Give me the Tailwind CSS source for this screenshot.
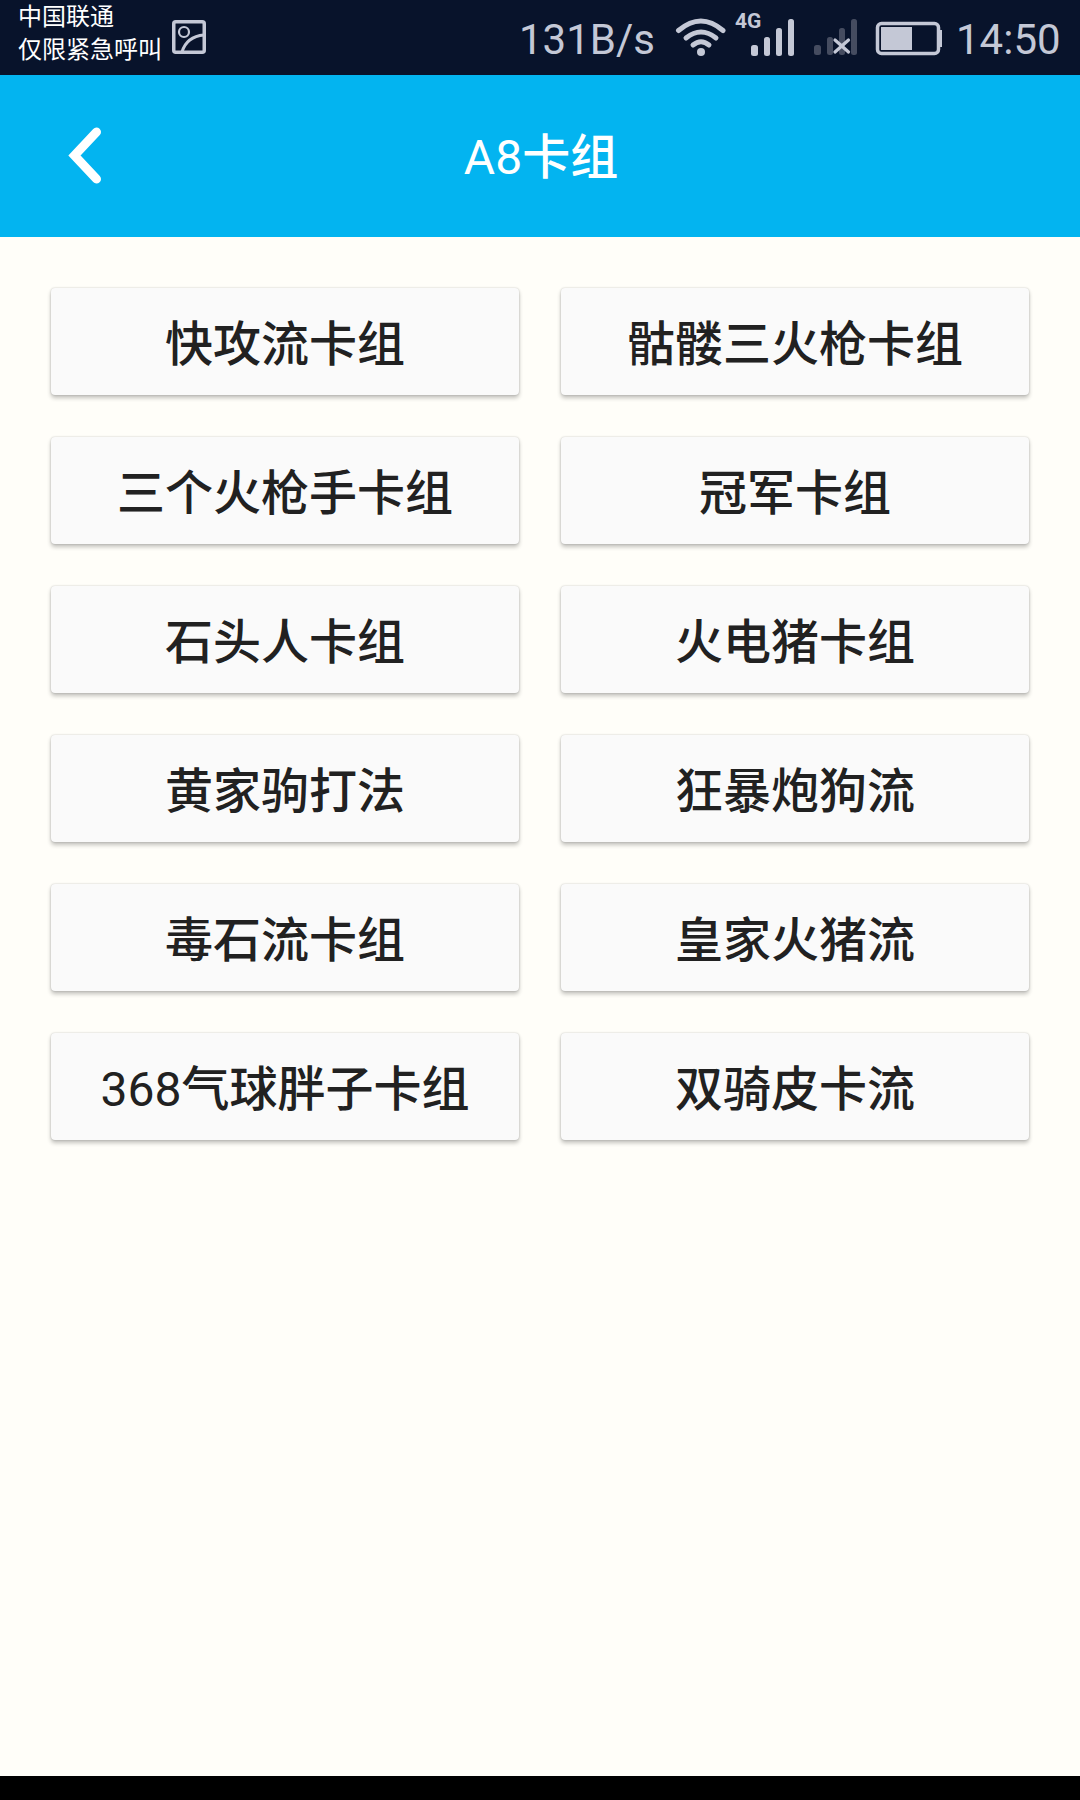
<!DOCTYPE html>
<html lang="zh-CN">
<head>
  <meta charset="UTF-8">
  <title>A8卡组</title>
  <script src="https://cdn.jsdelivr.net/npm/@tailwindcss/browser@4"></script>
</head>
<body class="w-[1080px] h-[1800px] flex flex-col overflow-hidden bg-[#fffef9] font-[Roboto,'Noto_Sans_CJK_SC',sans-serif]">

  <!-- Status bar -->
  <div class="h-[75px] shrink-0 flex items-start bg-[#08132b] text-[#c4c8d6]">
    <div class="w-[144px] ml-[18px] pt-px text-[24px] leading-[33px] text-white whitespace-nowrap">
      <div>中国联通</div>
      <div>仅限紧急呼叫</div>
    </div>
    <svg class="ml-[10px] mt-5 w-[34px] h-[34px]" viewBox="0 0 34 34" fill="none" stroke="#c4c8d6">
      <rect x="1.75" y="1.75" width="30.5" height="30.5" rx="2" stroke-width="3.5"/>
      <circle cx="12" cy="12" r="5" stroke-width="2.2"/>
      <path d="M10 32C13 22 20 16 32 15" stroke-width="3"/>
    </svg>
    <div class="ml-[313px] w-[138px] pt-[15px] text-[42px] leading-[49px] whitespace-nowrap">131B/s</div>
    <svg class="ml-[18px] mt-[17px] w-[52px] h-[40px]" viewBox="0 0 52 40" fill="none" stroke="#c4c8d6" stroke-width="5" stroke-linecap="round">
      <path d="M3.5 13.5Q26 -5.5 48 13.5"/>
      <path d="M11 21Q26 9 41 21"/>
      <path d="M18 28Q26 21.5 34 28"/>
      <circle cx="26" cy="35" r="4" fill="#c4c8d6" stroke="none"/>
    </svg>
    <div class="relative w-[66px] h-[75px]">
      <span class="absolute left-[8px] top-[10px] text-[21px] leading-[22px] font-bold">4G</span>
      <svg class="absolute left-[23px] top-[18px] w-[46px] h-[39px]" viewBox="0 0 46 39" fill="#c4c8d6">
        <rect x="1" y="27" width="7" height="11" rx="2.5"/>
        <rect x="14" y="19" width="6" height="19" rx="2.5"/>
        <rect x="26" y="10" width="6" height="28" rx="2.5"/>
        <rect x="38" y="1" width="6" height="37" rx="2.5"/>
      </svg>
    </div>
    <svg class="ml-[20px] mt-[18px] w-[46px] h-[39px]" viewBox="0 0 46 39" fill="#454c60">
      <rect x="1" y="27" width="7" height="10" rx="2.5"/>
      <rect x="14" y="19" width="6" height="18" rx="2.5"/>
      <rect x="26" y="10" width="6" height="27" rx="2.5"/>
      <rect x="38" y="1" width="6" height="36" rx="2.5"/>
      <path d="M22 22L35.5 34M35.5 22L22 34" stroke="#c4c8d6" stroke-width="3.2" stroke-linecap="round"/>
    </svg>
    <svg class="ml-[16px] mt-[21px] w-[68px] h-[35px]" viewBox="0 0 68 35" fill="#c4c8d6">
      <rect x="2.5" y="2.5" width="61" height="30" rx="4" fill="none" stroke="#c4c8d6" stroke-width="3.5"/>
      <rect x="6" y="6" width="31" height="23"/>
      <path d="M64 9h3v17h-3z"/>
    </svg>
    <div class="ml-[13px] pt-[15px] text-[42px] leading-[49px] whitespace-nowrap">14:50</div>
  </div>

  <!-- Header -->
  <header class="h-[162px] shrink-0 flex items-center bg-[#03b4f0] text-white">
    <div class="w-[141px] pl-[68px]">
      <svg class="w-[34px] h-[58px]" viewBox="0 0 34 58" fill="none" stroke="#fff" stroke-width="9" stroke-linecap="round">
        <path d="M28.5 5L6.5 28.5L28.5 52"/>
      </svg>
    </div>
    <h1 class="flex-1 pt-[4px] text-center text-[48px] leading-[70px] font-medium"><span class="font-normal">A8</span>卡组</h1>
    <div class="w-[139px]"></div>
  </header>

  <!-- Deck list -->
  <main id="decks" class="flex-1 grid grid-cols-2 auto-rows-[107px] content-start gap-x-[42px] gap-y-[42px] px-[51px] pt-[51px]"></main>

  <div class="h-6 shrink-0 bg-black"></div>

  <script>
    const decks = [
      "快攻流卡组", "骷髅三火枪卡组",
      "三个火枪手卡组", "冠军卡组",
      "石头人卡组", "火电猪卡组",
      "黄家驹打法", "狂暴炮狗流",
      "毒石流卡组", "皇家火猪流",
      "368气球胖子卡组", "双骑皮卡流"
    ];

    const decksEl = document.getElementById("decks");

    decks.forEach(name => {
      const btn = document.createElement("button");
      btn.className = "flex items-center justify-center pt-[7px] rounded-[4px] bg-[#fafafa] text-[#212121] text-[48px] leading-[70px] font-medium whitespace-nowrap shadow-[0_3px_4px_rgba(0,0,0,0.24),0_0_2px_rgba(0,0,0,0.22)]";
      // digits are one weight lighter than the Chinese text
      btn.innerHTML = name.replace(/\d+/, '<span class="font-normal">$&</span>');
      decksEl.appendChild(btn);
    });
  </script>
</body>
</html>
